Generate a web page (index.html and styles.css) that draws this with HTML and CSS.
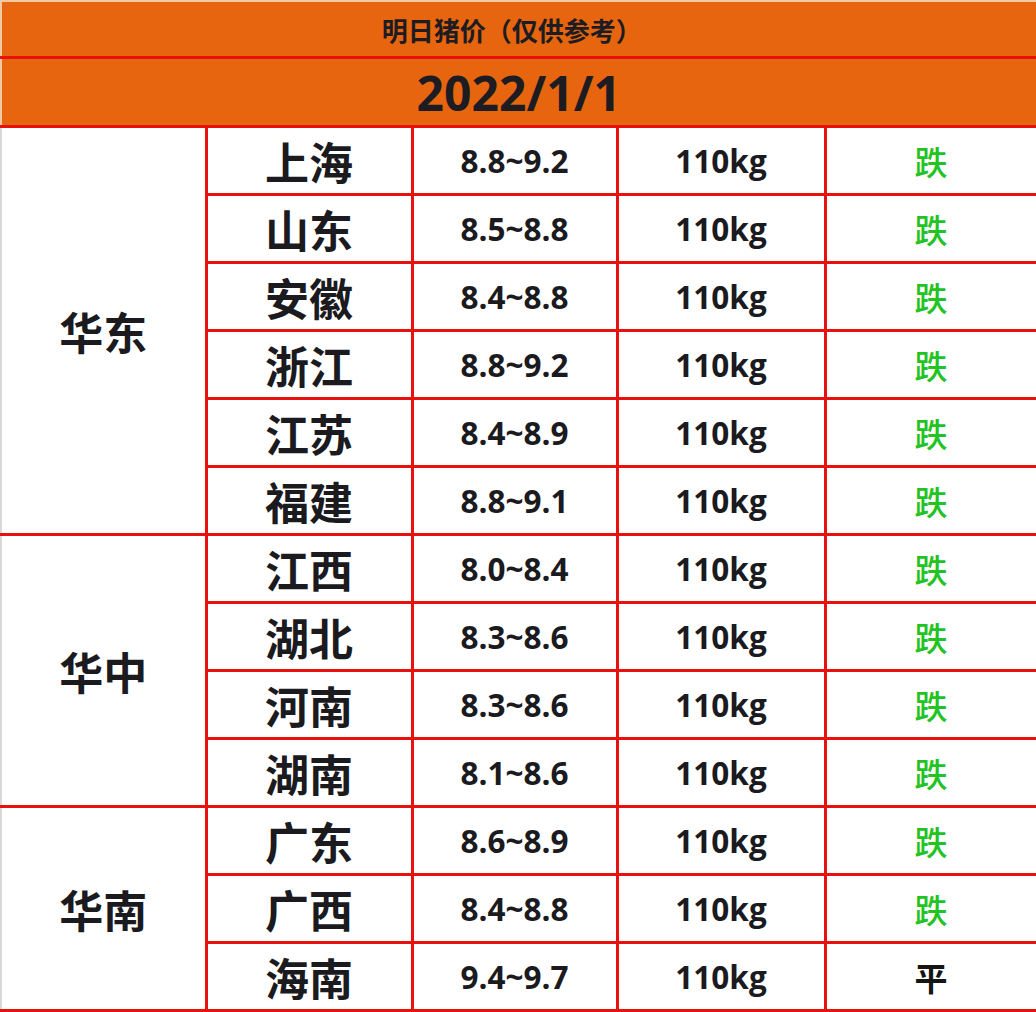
FILE: index.html
```html
<!DOCTYPE html>
<html lang="zh">
<head>
<meta charset="utf-8">
<title>明日猪价</title>
<link rel="stylesheet" href="styles.css">
</head>
<body>
<table class="price-table">
  <colgroup>
    <col class="c-region"><col class="c-prov"><col class="c-price"><col class="c-weight"><col class="c-trend">
  </colgroup>
  <thead>
    <tr class="title-row"><th colspan="5">明日猪价（仅供参考）</th></tr>
    <tr class="date-row"><th colspan="5">2022/1/1</th></tr>
  </thead>
  <tbody>
    <tr><td class="region" rowspan="6">华东</td><td class="prov">上海</td><td class="num">8.8~9.2</td><td class="num">110kg</td><td class="down">跌</td></tr>
    <tr><td class="prov">山东</td><td class="num">8.5~8.8</td><td class="num">110kg</td><td class="down">跌</td></tr>
    <tr><td class="prov">安徽</td><td class="num">8.4~8.8</td><td class="num">110kg</td><td class="down">跌</td></tr>
    <tr><td class="prov">浙江</td><td class="num">8.8~9.2</td><td class="num">110kg</td><td class="down">跌</td></tr>
    <tr><td class="prov">江苏</td><td class="num">8.4~8.9</td><td class="num">110kg</td><td class="down">跌</td></tr>
    <tr><td class="prov">福建</td><td class="num">8.8~9.1</td><td class="num">110kg</td><td class="down">跌</td></tr>
    <tr><td class="region" rowspan="4">华中</td><td class="prov">江西</td><td class="num">8.0~8.4</td><td class="num">110kg</td><td class="down">跌</td></tr>
    <tr><td class="prov">湖北</td><td class="num">8.3~8.6</td><td class="num">110kg</td><td class="down">跌</td></tr>
    <tr><td class="prov">河南</td><td class="num">8.3~8.6</td><td class="num">110kg</td><td class="down">跌</td></tr>
    <tr><td class="prov">湖南</td><td class="num">8.1~8.6</td><td class="num">110kg</td><td class="down">跌</td></tr>
    <tr><td class="region" rowspan="3">华南</td><td class="prov">广东</td><td class="num">8.6~8.9</td><td class="num">110kg</td><td class="down">跌</td></tr>
    <tr><td class="prov">广西</td><td class="num">8.4~8.8</td><td class="num">110kg</td><td class="down">跌</td></tr>
    <tr><td class="prov">海南</td><td class="num">9.4~9.7</td><td class="num">110kg</td><td class="flat">平</td></tr>
  </tbody>
</table>
</body>
</html>
```
FILE: styles.css
```css
html, body {
  margin: 0;
  padding: 0;
  background: #ffffff;
}

body {
  font-family: "Open Sans", "Noto Sans CJK SC", sans-serif;
  color: #1a1a1f;
}

.price-table {
  width: 1036px;
  border-collapse: collapse;
  table-layout: fixed;
  border-top: 2px solid #f6c9a2;
}

.c-region { width: 205px; }
.c-prov { width: 206px; }
.c-price { width: 205px; }
.c-weight { width: 208px; }
.c-trend { width: 212px; }

.price-table th,
.price-table td {
  border: 3px solid #e8120c;
  padding: 0;
  text-align: center;
  vertical-align: middle;
}

.price-table th {
  background: #e6650e;
  color: #1c1c22;
  font-family: "Noto Sans CJK SC", sans-serif;
  border-left: 2px solid #f6c9a2;
}

.title-row th {
  border-top: 2px solid #f6c9a2;
  height: 54px;
  font-size: 26px;
  font-weight: 700;
  padding-right: 14px;
}

.date-row th {
  height: 66px;
  font-family: "Open Sans", "Noto Sans CJK SC", sans-serif;
  font-size: 48px;
  font-weight: 700;
}

.price-table tbody td {
  height: 65px;
}

.price-table td:first-child {
  border-left: 2px solid #d8d8d8;
}

.region,
.prov {
  font-family: "Noto Sans CJK SC", sans-serif;
  font-size: 44px;
  font-weight: 700;
}

.num {
  font-size: 31.5px;
  font-weight: 700;
}

.down,
.flat {
  font-family: "Noto Sans CJK SC", sans-serif;
  font-size: 33px;
  font-weight: 500;
}

.down {
  color: #22c322;
}

.flat {
  color: #151515;
  font-weight: 700;
}
```
